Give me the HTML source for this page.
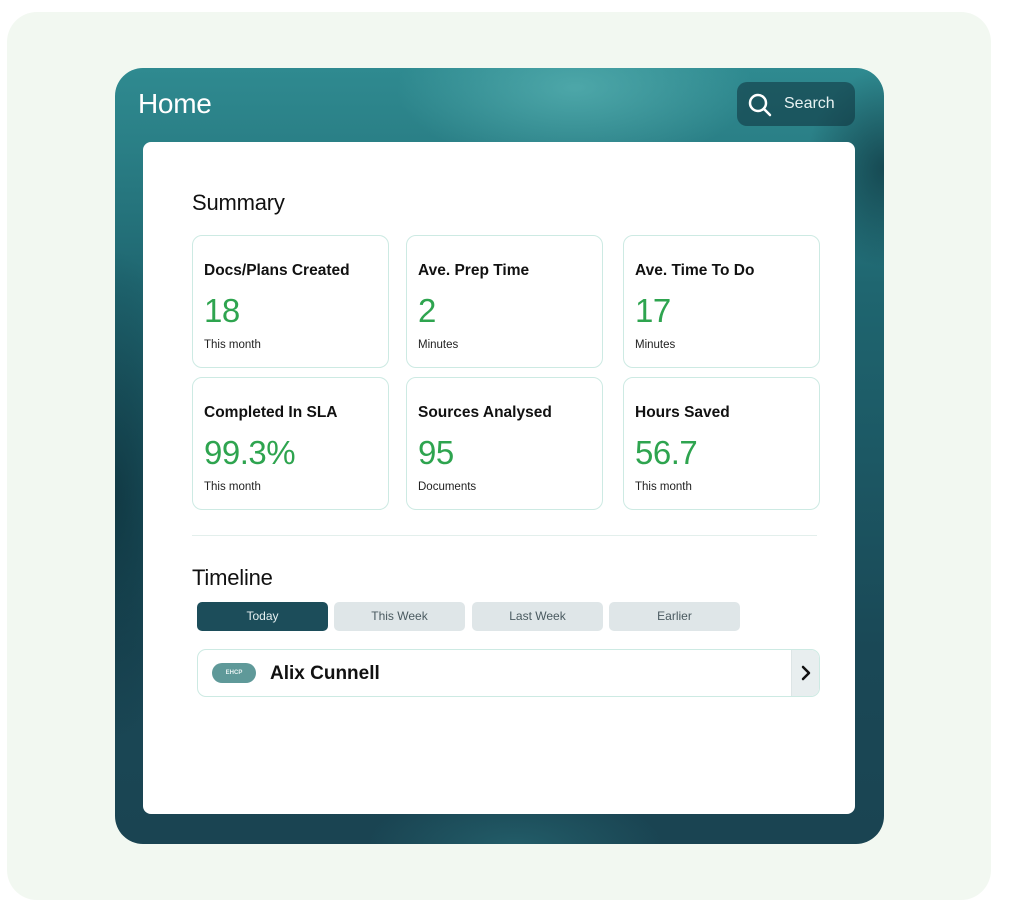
<!DOCTYPE html>
<html><head><meta charset="utf-8"><style>
*{box-sizing:border-box;margin:0;padding:0}
body{width:1010px;height:914px;background:#fff;font-family:"Liberation Sans",sans-serif;position:relative;overflow:hidden}
.bg{position:absolute;left:7px;top:12px;width:984px;height:888px;background:#f2f8f1;border-radius:30px}
.panel{position:absolute;left:115px;top:68px;width:769px;height:776px;border-radius:28px;overflow:hidden;
background:linear-gradient(180deg,#2f8a90 0%,#2a7f86 10%,#1f6670 28%,#1c5864 50%,#1a4856 75%,#1a4452 100%)}
.panel .g1{position:absolute;left:280px;top:-60px;width:360px;height:160px;background:radial-gradient(ellipse,rgba(90,180,180,.7),rgba(90,180,180,0) 70%)}
.panel .g2{position:absolute;left:-80px;top:180px;width:160px;height:500px;background:radial-gradient(ellipse,rgba(10,40,50,.6),rgba(10,40,50,0) 70%)}
.panel .g3{position:absolute;left:690px;top:0;width:160px;height:200px;background:radial-gradient(ellipse,rgba(10,40,50,.6),rgba(10,40,50,0) 70%)}
.panel .g4{position:absolute;left:250px;top:720px;width:300px;height:120px;background:radial-gradient(ellipse,rgba(40,110,120,.6),rgba(40,110,120,0) 70%)}
.home{position:absolute;left:23px;top:20px;color:#fff;font-size:28px;letter-spacing:-0.3px}
.search{position:absolute;left:622px;top:14px;width:118px;height:44px;border-radius:10px;background:rgba(15,50,60,.55);color:#e8f2f2;font-size:16px}
.search span{position:absolute;left:47px;top:13px}
.search svg{position:absolute;left:10px;top:10px}
.card{position:absolute;left:143px;top:142px;width:712px;height:672px;background:#fff;border-radius:8px}
.t{position:absolute;font-size:22px;color:#111;letter-spacing:-0.2px}
.s{position:absolute;width:197px;height:133px;border:1.5px solid #cdeae3;border-radius:10px}
.s b{position:absolute;left:11px;top:26px;font-size:15.5px;color:#111}
.s i{position:absolute;left:11px;top:56px;font-style:normal;font-size:33px;color:#2ea44f;letter-spacing:-0.5px;font-weight:300}
.s em{position:absolute;left:11px;top:103px;font-style:normal;font-size:11.5px;color:#222}
.hr{position:absolute;left:192px;top:535px;width:625px;height:1px;background:#e3efec}
.tab{position:absolute;top:602px;width:131px;height:29px;border-radius:5px;background:#dfe6e8;color:#4a5a60;font-size:12px;text-align:center;line-height:29px}
.row{position:absolute;left:197px;top:649px;width:623px;height:48px;border:1.5px solid #cdeae3;border-radius:9px;overflow:hidden;background:#fff}
.pill{position:absolute;left:14px;top:13px;width:44px;height:20px;border-radius:10px;background:#5f9999;color:#e7f2f2;font-size:6px;font-weight:bold;text-align:center;line-height:20px}
.name{position:absolute;left:72px;top:13px;font-size:19px;font-weight:bold;color:#111}
.arr{position:absolute;right:0;top:0;width:28px;height:100%;background:#e8eeef;border-left:1px solid #dde5e6}
</style></head><body>
<div class="bg"></div>
<div class="panel"><div class="g1"></div><div class="g2"></div><div class="g3"></div><div class="g4"></div>
<div class="home">Home</div>
<div class="search"><svg width="26" height="26" viewBox="0 0 26 26"><circle cx="11" cy="11" r="8" fill="none" stroke="#fff" stroke-width="2.5"/><path d="M17 17l6 6" stroke="#fff" stroke-width="2.5" stroke-linecap="round"/></svg><span>Search</span></div>
</div>
<div class="card"></div>
<div class="t" style="left:192px;top:190px">Summary</div>
<div class="s" style="left:192px;top:235px"><b>Docs/Plans Created</b><i>18</i><em>This month</em></div>
<div class="s" style="left:406px;top:235px"><b>Ave. Prep Time</b><i>2</i><em>Minutes</em></div>
<div class="s" style="left:623px;top:235px"><b>Ave. Time To Do</b><i>17</i><em>Minutes</em></div>
<div class="s" style="left:192px;top:377px"><b>Completed In SLA</b><i>99.3%</i><em>This month</em></div>
<div class="s" style="left:406px;top:377px"><b>Sources Analysed</b><i>95</i><em>Documents</em></div>
<div class="s" style="left:623px;top:377px"><b>Hours Saved</b><i>56.7</i><em>This month</em></div>
<div class="hr"></div>
<div class="t" style="left:192px;top:565px">Timeline</div>
<div class="tab" style="left:197px;background:#1c4d5a;color:#e6f0f1">Today</div>
<div class="tab" style="left:334px">This Week</div>
<div class="tab" style="left:472px">Last Week</div>
<div class="tab" style="left:609px">Earlier</div>
<div class="row"><div class="pill">EHCP</div><div class="name">Alix Cunnell</div>
<div class="arr"><svg width="28" height="46" viewBox="0 0 28 46"><path d="M11 17l6 6-6 6" fill="none" stroke="#111" stroke-width="2.5" stroke-linecap="round" stroke-linejoin="round"/></svg></div></div>
</body></html>
